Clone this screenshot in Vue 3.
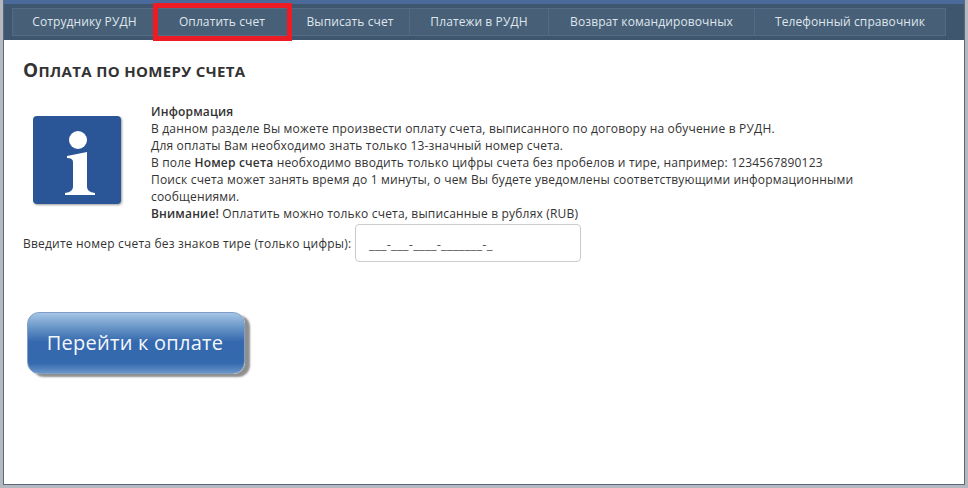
<script setup>
const tabs = [
  { label: 'Сотруднику РУДН', width: 142 },
  { label: 'Оплатить счет', width: 137 },
  { label: 'Выписать счет', width: 119 },
  { label: 'Платежи в РУДН', width: 139 },
  { label: 'Возврат командировочных', width: 206 },
  { label: 'Телефонный справочник', width: 191 },
]
</script>

<template>
  <div class="frame">
    <div class="window">
      <nav class="nav">
        <div class="tabs">
          <a v-for="t in tabs" :key="t.label" class="tab" :style="{ width: t.width + 'px' }">{{ t.label }}</a>
        </div>
        <div class="highlight"></div>
      </nav>
      <main class="content">
        <h1 class="title">Оплата по номеру счета</h1>
        <section class="info">
          <div class="icon-cell">
            <svg class="icon" width="92" height="92" viewBox="0 0 92 92">
              <defs>
                <filter id="s" x="-10%" y="-10%" width="120%" height="120%">
                  <feDropShadow dx="1" dy="1" stdDeviation="1" flood-color="#555" flood-opacity="0.6" />
                </filter>
              </defs>
              <rect x="0" y="0" width="88" height="88" rx="4" fill="#2b5797" filter="url(#s)" />
              <circle cx="45" cy="24" r="9" fill="#fff" />
              <path d="M34 40 L54 36 L54 71 Q54 76 62 77 L62 79 L32 79 L32 77 Q40 76 40 71 L40 46 Q40 42 34 42 Z" fill="#fff" />
            </svg>
          </div>
          <div class="text">
            <p><b>Информация</b></p>
            <p>В данном разделе Вы можете произвести оплату счета, выписанного по договору на обучение в РУДН.</p>
            <p>Для оплаты Вам необходимо знать только 13-значный номер счета.</p>
            <p>В поле <b>Номер счета</b> необходимо вводить только цифры счета без пробелов и тире, например: 1234567890123</p>
            <p>Поиск счета может занять время до 1 минуты, о чем Вы будете уведомлены соответствующими информационными сообщениями.</p>
            <p><b>Внимание!</b> Оплатить можно только счета, выписанные в рублях (RUB)</p>
          </div>
        </section>
        <div class="field">
          <label class="label">Введите номер счета без знаков тире (только цифры):</label>
          <div class="input">___-___-____-_______-_</div>
        </div>
        <button class="pay">Перейти к оплате</button>
      </main>
    </div>
  </div>
</template>

<style scoped>
.frame {
  width: 968px;
  height: 488px;
  box-sizing: border-box;
  padding: 0 3px 3px 3px;
  background: #b4b8c0;
  font-family: "Open Sans", sans-serif;
  color: #333;
  font-size: 12px;
}
.window {
  height: 100%;
  box-sizing: border-box;
  border-left: 1px solid #5d6878;
  border-right: 1px solid #5d6878;
  border-bottom: 1px solid #5d6878;
  display: flex;
  flex-direction: column;
  background: #fff;
}
.nav {
  position: relative;
  height: 40px;
  box-sizing: border-box;
  background: #3f566f;
  border-top: 4px solid #4a6a9c;
  padding: 4px 0 4px 8px;
  flex: none;
}
.tabs {
  display: flex;
  height: 28px;
}
.tab {
  box-sizing: border-box;
  height: 28px;
  line-height: 26px;
  text-align: center;
  color: #dfe6ec;
  font-size: 12px;
  letter-spacing: 0.1px;
  background: #485f78;
  border: 1px solid #536b84;
  border-left-width: 0;
}
.tab:first-child {
  border-left-width: 1px;
  padding-left: 3px;
}
.highlight {
  position: absolute;
  left: 149px;
  top: -1px;
  width: 139px;
  height: 38px;
  box-sizing: border-box;
  border: 5px solid #ed1c24;
}
.content {
  flex: 1;
  padding: 18px 0 0 19px;
}
.title {
  margin: 0;
  font-size: 15px;
  line-height: 24px;
  font-weight: 700;
  text-transform: uppercase;
  letter-spacing: 0.34px;
  color: #333;
}
.title::first-letter {
  font-size: 19px;
}
.info {
  display: flex;
  margin-top: 19px;
}
.icon-cell {
  width: 128px;
  flex: none;
  padding: 14px 0 0 10px;
  box-sizing: border-box;
}
.icon {
  display: block;
}
.text {
  width: 712px;
  line-height: 17px;
  padding-top: 1px;
  letter-spacing: 0.18px;
}
.text p {
  margin: 0;
}
.text b {
  font-weight: 600;
}
.field {
  display: flex;
  align-items: center;
  margin-top: 2px;
}
.label {
  width: 332px;
  flex: none;
  white-space: nowrap;
  letter-spacing: 0.2px;
}
.input {
  width: 226px;
  height: 38px;
  box-sizing: border-box;
  border: 1px solid #ccc;
  border-radius: 4px;
  padding: 0 13px;
  line-height: 38px;
  color: #555;
  font-size: 13px;
  letter-spacing: 0.2px;
  background: #fff;
}
.pay {
  display: block;
  margin: 50px 0 0 4px;
  width: 218px;
  height: 62px;
  border: 1px solid #7f9fc6;
  border-radius: 12px;
  background: linear-gradient(#a7c4e6 0%, #6d9aca 22%, #3568ae 48%, #346aae 84%, #6a95c8 100%);
  box-shadow: 5px 3px 2px #8f8f8f;
  color: #f2f7fc;
  font-family: "Open Sans", sans-serif;
  font-size: 20px;
  letter-spacing: 0.25px;
  padding: 0 2px 2px 0;
}
</style>
